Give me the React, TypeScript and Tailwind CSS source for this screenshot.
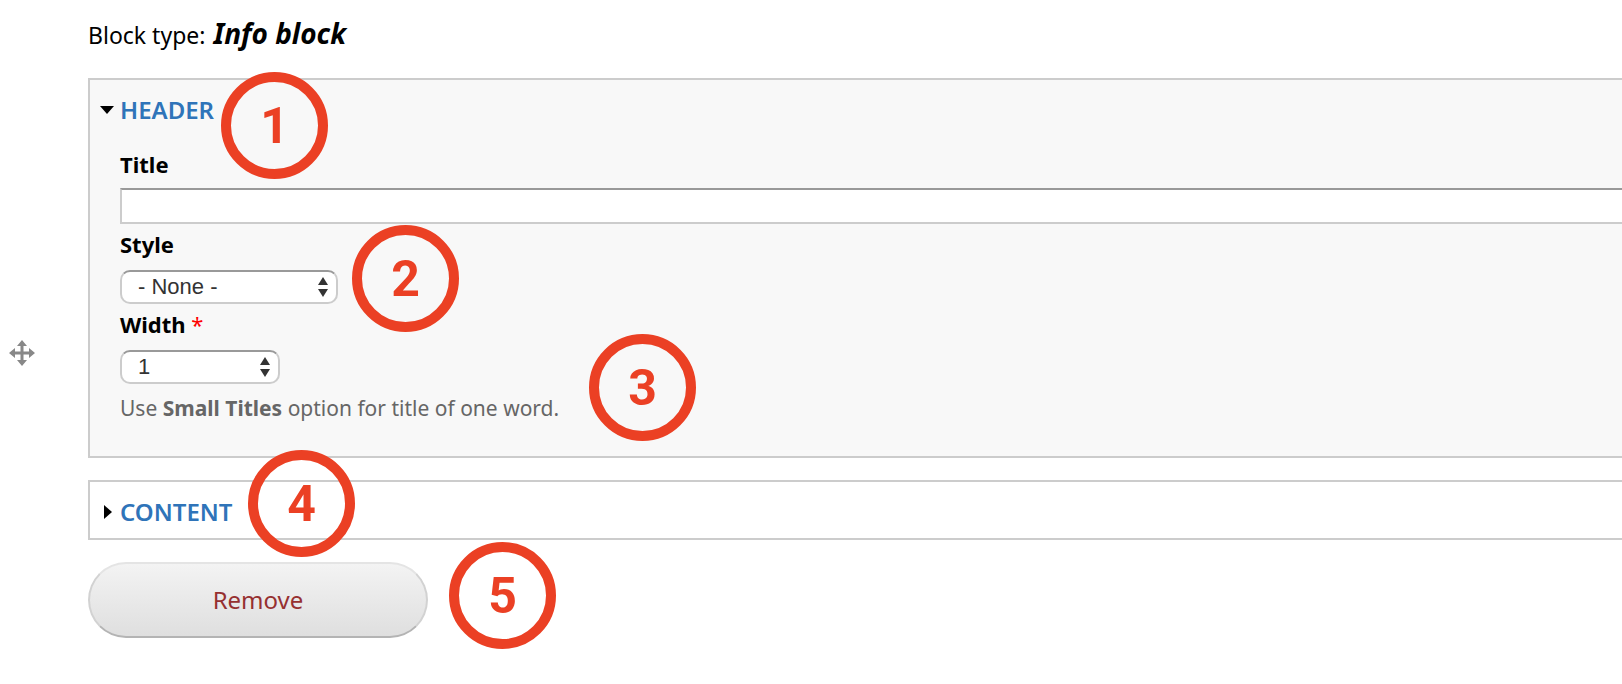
import React from "react";

const bodyFont = "font-['Noto_Sans','Open_Sans',sans-serif]";

function Marker({ n, className }: { n: number; className: string }) {
  return (
    <span
      className={`pointer-events-none absolute z-10 flex size-[107px] items-center justify-center rounded-full border-10 border-[#eb4024] font-['Roboto',sans-serif] text-[50px] leading-none font-bold text-[#eb4024] ${className}`}
    >
      {n}
    </span>
  );
}

function SelectBox({ id, option, className }: { id: string; option: string; className: string }) {
  return (
    <div className={`relative ${className}`}>
      <select
        id={id}
        className="block h-[34px] w-full appearance-none rounded-[10px] border-2 border-[#ccc] border-t-[#999] bg-white pl-4 font-['Liberation_Sans',Arial,sans-serif] text-[22px] leading-[30px] text-[#333]"
      >
        <option>{option}</option>
      </select>
      <svg viewBox="0 0 10 20" className="pointer-events-none absolute top-[7px] right-[10px] h-5 w-[10px] fill-[#333]">
        <path d="M5 0L10 8H0zM5 20L10 12H0z" />
      </svg>
    </div>
  );
}

export default function App() {
  return (
    <main className={`flex min-h-screen overflow-x-hidden bg-white text-[22px] leading-8 text-black ${bodyFont}`}>
      <div className="flex w-[88px] shrink-0 pt-[340px] pl-[9px]">
        <button type="button" aria-label="Move" className="size-[26px]">
          <svg viewBox="0 0 26 26" className="size-full fill-[#888]">
            <path d="M13 0L18 6H14.5V11.5H20V8L26 13L20 18V14.5H14.5V20H18L13 26L8 20H11.5V14.5H6V18L0 13L6 8V11.5H11.5V6H8Z" />
          </svg>
        </button>
      </div>
      <div className="-mr-1 min-w-0 flex-1">
        <p className="flex h-[54px] items-baseline gap-2 pt-[14px] text-[23px] leading-[38px]">
          <span>Block type:</span>
          <em className="text-[28px] font-bold">Info block</em>
        </p>
        <section className="relative mt-6 border-2 border-[#ccc] bg-[#f8f8f8] pb-8 pl-[30px]">
          <a href="#header" className="relative -ml-5 flex items-center pt-[14px] text-2xl leading-8 font-semibold text-[#2f74b9]">
            <svg viewBox="0 0 14 8" className="mr-[6px] h-2 w-[14px] fill-black"><path d="M0 0H14L7 8Z" /></svg>
            HEADER
          </a>
          <div className="pt-[22px]">
            <label htmlFor="title" className="block pb-2 font-bold">Title</label>
            <input id="title" className="block h-9 w-full border-2 border-[#ccc] border-t-[#999] bg-white px-2" />
          </div>
          <div className="pt-1">
            <label htmlFor="style" className="block pb-[10px] font-bold">Style</label>
            <SelectBox id="style" option="- None -" className="w-[218px]" />
          </div>
          <div className="pt-1">
            <label htmlFor="width" className="block pb-[10px] font-bold">
              Width <span className="font-normal text-[#f00]">*</span>
            </label>
            <SelectBox id="width" option="1" className="w-40" />
          </div>
          <p className="pt-2 text-[21px] leading-8 text-[#666]">
            Use <strong>Small Titles</strong> option for title of one word.
          </p>
          <Marker n={1} className="-top-2 left-[131px]" />
          <Marker n={2} className="top-[145px] left-[262px]" />
          <Marker n={3} className="top-[254px] left-[499px]" />
        </section>
        <section className="relative mt-[22px] border-2 border-[#ccc] pt-[14px] pb-[10px] pl-[10px]">
          <a href="#content" className="flex items-center text-2xl leading-8 font-semibold text-[#2f74b9]">
            <svg viewBox="0 0 8 14" className="mr-[8px] ml-1 h-[14px] w-2 fill-black"><path d="M0 0V14L8 7Z" /></svg>
            CONTENT
          </a>
          <Marker n={4} className="-top-8 left-[158px]" />
        </section>
        <div className="relative mt-[22px] pb-4">
          <button type="button" className="h-[76px] w-[340px] rounded-full border-2 border-t-[#e4e4e4] border-r-[#d2d2d2] border-b-[#b4b4b4] border-l-[#d2d2d2] bg-linear-to-b from-[#f3f3f3] to-[#dfdfdf] text-[24px] text-[#963030]">
            Remove
          </button>
          <Marker n={5} className="-top-5 left-[361px]" />
        </div>
      </div>
    </main>
  );
}
